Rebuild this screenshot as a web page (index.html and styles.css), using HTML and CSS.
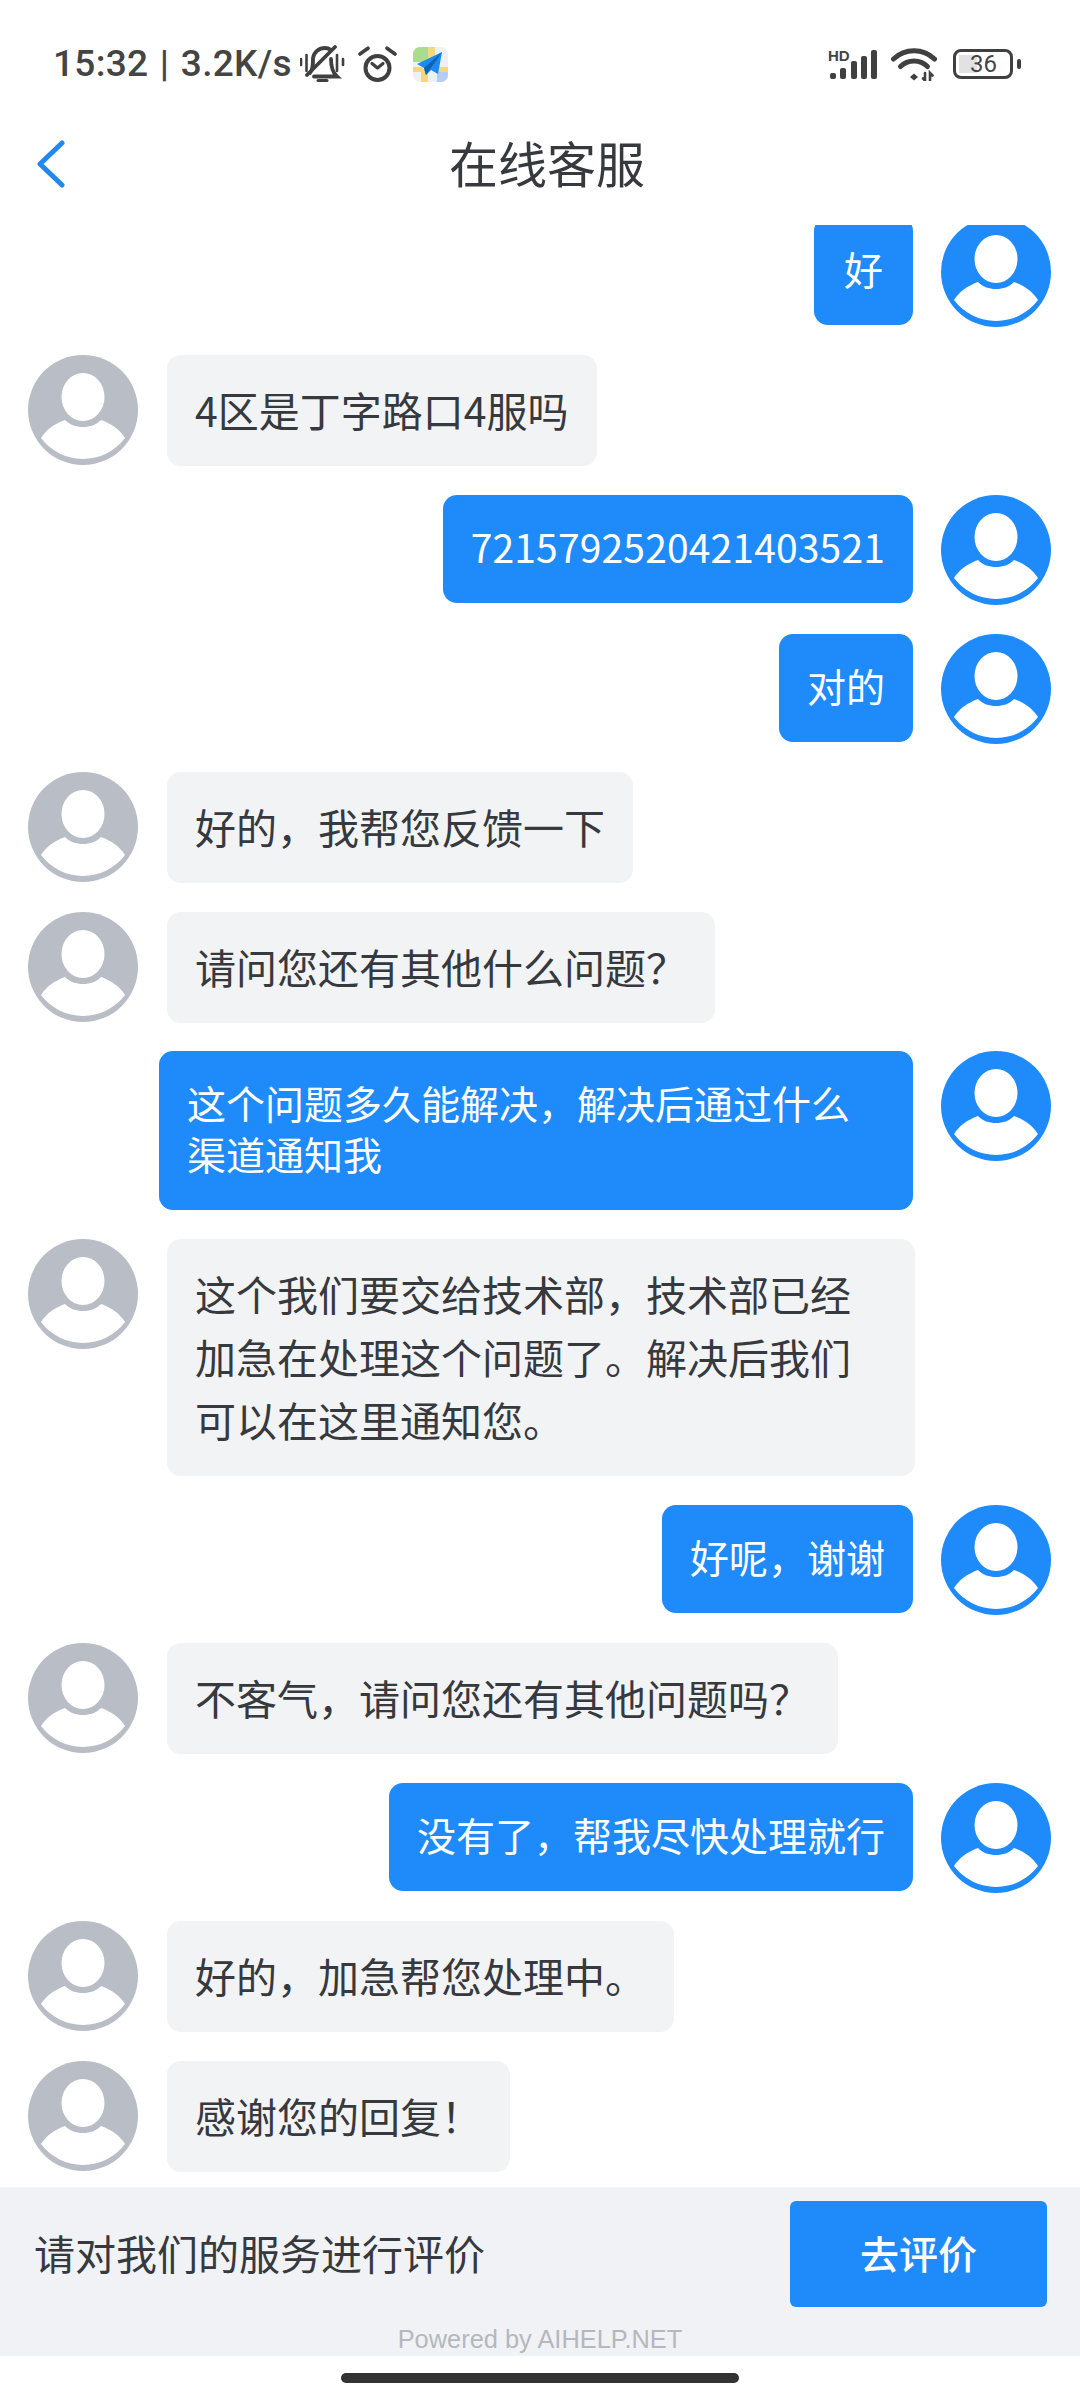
FILE: index.html
```html
<!DOCTYPE html>
<html lang="zh">
<head>
<meta charset="utf-8">
<title>在线客服</title>
<link rel="stylesheet" href="styles.css">
</head>
<body>

<svg class="defs" width="0" height="0">
  <symbol id="person" viewBox="0 0 110 110">
    <circle cx="55" cy="55" r="55" fill="currentColor"/>
    <ellipse cx="55" cy="42" rx="21.500" ry="24" fill="#fff"/>
    <path d="M13 83C18 75 26 69 37 65C42 70 48 72 55 72C62 72 68 70 73 65C84 69 92 75 97 83A52.500 52.500 0 0 1 13 83Z" fill="#fff"/>
  </symbol>
</svg>

<div class="page">

  <div class="status">
    <span class="status-text">15:32 | 3.2K/s</span>
    <svg class="ic-bell" viewBox="0 0 46 38" fill="none" stroke="#404040" stroke-linecap="round">
      <path d="M10 28C13 25 13 20 13 13C14 7 19 3 25 3C27 3 29 3.500 31 5" stroke-width="3.800"/>
      <path d="M31 14C31 21 32 27 37 31.500H14" stroke-width="3.800"/>
      <path d="M35 2L7 30" stroke-width="3.800"/>
      <path d="M18 35.500H27" stroke-width="3"/>
      <path d="M1 14V20M6.500 10V26M37 10V26M43 14V20" stroke-width="2.600"/>
    </svg>
    <svg class="ic-alarm" viewBox="0 0 40 36" fill="none" stroke="#404040" stroke-linecap="round" stroke-linejoin="round">
      <circle cx="19.500" cy="22" r="12" stroke-width="4"/>
      <path d="M14 17.500L19.500 22L25 17.500" stroke-width="3.200"/>
      <path d="M2 8L10 2.200M37 8L29 2.200" stroke-width="3.600"/>
    </svg>
    <svg class="ic-map" viewBox="0 0 35 35">
      <rect width="35" height="35" rx="7" fill="#eff0f5"/>
      <path d="M0 7A7 7 0 0 1 7 0H15V15H0Z" fill="#a9dc8c"/>
      <path d="M24 25H35V28A7 7 0 0 1 28 35H24Z" fill="#b4cdf6"/>
      <path d="M15 0H22V12H15ZM0 20H10V25H0ZM8 22H15V35H8ZM24 20H35V25H24Z" fill="#f6d77c"/>
      <path d="M29 5L4 17L11 21L13 28L18 23L25 27Z" fill="#1a8cf0"/>
      <path d="M11 21L29 5L13 28Z" fill="#0a62b8"/>
    </svg>
    <span class="status-gap"></span>
    <div class="cell">
      <span class="hd">HD</span>
      <svg class="ic-signal" viewBox="0 0 48 30" fill="#404040">
        <rect x="0" y="24" width="6" height="6" rx="2"/>
        <rect x="10" y="19" width="6" height="11" rx="2"/>
        <rect x="21" y="12" width="6" height="18" rx="2"/>
        <rect x="31" y="7" width="6" height="23" rx="2"/>
        <rect x="41" y="1" width="6" height="29" rx="2"/>
      </svg>
    </div>
    <svg class="ic-wifi" viewBox="0 0 46 33" fill="none" stroke="#404040" stroke-linecap="round">
      <path d="M2.500 11C14 0 32 0 43.500 11" stroke-width="5"/>
      <path d="M9.500 18.500C17 11 29 11 36.500 18.500" stroke-width="5"/>
      <path d="M19 29L23 25.500L27 29L23 32.500Z" fill="#404040" stroke="none"/>
      <path d="M34 25V32.500M32 30.500L34 32.500M39 32.500V25L41.500 27.500" stroke-width="2.600"/>
    </svg>
    <div class="battery">
      <div class="battery-body"><span class="battery-level"></span><span class="battery-num">36</span></div>
      <span class="battery-nub"></span>
    </div>
  </div>

  <div class="nav">
    <svg class="back" viewBox="0 0 32 50" fill="none" stroke="#2189ec" stroke-width="5" stroke-linecap="round" stroke-linejoin="round">
      <path d="M27 5L5 26L27 47"/>
    </svg>
    <div class="title">在线客服</div>
  </div>

  <div class="chat">
    <div class="row me">
      <div class="bubble short">好</div>
      <svg class="avatar"><use href="#person"/></svg>
    </div>
    <div class="row them">
      <svg class="avatar"><use href="#person"/></svg>
      <div class="bubble">4区是丁字路口4服吗</div>
    </div>
    <div class="row me">
      <div class="bubble digits">7215792520421403521</div>
      <svg class="avatar"><use href="#person"/></svg>
    </div>
    <div class="row me">
      <div class="bubble">对的</div>
      <svg class="avatar"><use href="#person"/></svg>
    </div>
    <div class="row them">
      <svg class="avatar"><use href="#person"/></svg>
      <div class="bubble">好的&#xFF0C;我帮您反馈一下</div>
    </div>
    <div class="row them">
      <svg class="avatar"><use href="#person"/></svg>
      <div class="bubble">请问您还有其他什么问题&#xFF1F;</div>
    </div>
    <div class="row me">
      <div class="bubble">这个问题多久能解决&#xFF0C;解决后通过什么渠道通知我</div>
      <svg class="avatar"><use href="#person"/></svg>
    </div>
    <div class="row them">
      <svg class="avatar"><use href="#person"/></svg>
      <div class="bubble">这个我们要交给技术部&#xFF0C;技术部已经加急在处理这个问题了。解决后我们可以在这里通知您。</div>
    </div>
    <div class="row me">
      <div class="bubble">好呢&#xFF0C;谢谢</div>
      <svg class="avatar"><use href="#person"/></svg>
    </div>
    <div class="row them">
      <svg class="avatar"><use href="#person"/></svg>
      <div class="bubble">不客气&#xFF0C;请问您还有其他问题吗&#xFF1F;</div>
    </div>
    <div class="row me">
      <div class="bubble">没有了&#xFF0C;帮我尽快处理就行</div>
      <svg class="avatar"><use href="#person"/></svg>
    </div>
    <div class="row them">
      <svg class="avatar"><use href="#person"/></svg>
      <div class="bubble">好的&#xFF0C;加急帮您处理中。</div>
    </div>
    <div class="row them">
      <svg class="avatar"><use href="#person"/></svg>
      <div class="bubble">感谢您的回复&#xFF01;</div>
    </div>
  </div>

  <div class="footer">
    <div class="rate">
      <span class="rate-text">请对我们的服务进行评价</span>
      <div class="rate-btn">去评价</div>
    </div>
    <div class="powered">Powered by AIHELP.NET</div>
  </div>

  <div class="home"><span class="home-bar"></span></div>

</div>
</body>
</html>
```

FILE: styles.css
```css
html, body
  {
	margin : 0;
	padding : 0;
	background-color : #fff;
  } /*html, body*/

.defs
  {
	position : absolute;
  } /*.defs*/

.page
  {
	display : flex;
	flex-direction : column;
	width : 1080px;
	height : 2400px;
	overflow : hidden;
	font-family : "Noto Sans CJK SC", "Noto Sans", sans-serif;
	color : #36393d;
  } /*.page*/

/* status bar */
.status
  {
	display : flex;
	align-items : center;
	flex : none;
	box-sizing : border-box;
	height : 84px;
	padding : 44px 0 0 53px;
	color : #444;
  } /*.status*/
.status svg
  {
	display : block;
	flex : none;
  } /*.status svg*/
.status-text
  {
	font-family : Roboto, sans-serif;
	font-size : 37px;
	font-weight : 500;
	line-height : 40px;
	letter-spacing : 0.3px;
	word-spacing : 2px;
	white-space : nowrap;
  } /*.status-text*/
.ic-bell
  {
	width : 46px;
	height : 38px;
	margin-left : 8px;
  } /*.ic-bell*/
.ic-alarm
  {
	width : 40px;
	height : 36px;
	margin-left : 12px;
  } /*.ic-alarm*/
.ic-map
  {
	width : 35px;
	height : 35px;
	margin-left : 15px;
  } /*.ic-map*/
.status-gap
  {
	flex : 1;
  } /*.status-gap*/
.cell
  {
	position : relative;
	width : 48px;
	height : 30px;
  } /*.cell*/
.hd
  {
	position : absolute;
	left : -2px;
	top : -1px;
	font-family : "Liberation Sans", sans-serif;
	font-size : 15px;
	line-height : 15px;
	font-weight : bold;
  } /*.hd*/
.ic-signal
  {
	width : 48px;
	height : 30px;
  } /*.ic-signal*/
.ic-wifi
  {
	width : 46px;
	height : 33px;
	margin-left : 13px;
  } /*.ic-wifi*/
.battery
  {
	display : flex;
	align-items : center;
	margin-left : 16px;
	margin-right : 59px;
  } /*.battery*/
.battery-body
  {
	position : relative;
	box-sizing : border-box;
	width : 60px;
	height : 30px;
	border : 3px solid #404040;
	border-radius : 8px;
  } /*.battery-body*/
.battery-level
  {
	position : absolute;
	left : 3px;
	top : 3px;
	bottom : 3px;
	width : 18px;
	background-color : #e2e2e2;
  } /*.battery-level*/
.battery-num
  {
	position : absolute;
	left : 14px;
	top : 0;
	font-family : Roboto, sans-serif;
	font-size : 24px;
	line-height : 24px;
  } /*.battery-num*/
.battery-nub
  {
	width : 4px;
	height : 10px;
	margin-left : 4px;
	border-radius : 2px;
	background-color : #404040;
  } /*.battery-nub*/

/* title bar */
.nav
  {
	display : flex;
	align-items : center;
	flex : none;
	box-sizing : border-box;
	height : 141px;
	padding : 17px 0 0 35px;
  } /*.nav*/
.back
  {
	display : block;
	flex : none;
	width : 32px;
	height : 50px;
  } /*.back*/
.title
  {
	flex : 1;
	padding : 0 53px 2px 0;
	text-align : center;
	font-size : 49px;
	line-height : 60px;
  } /*.title*/

/* messages */
.chat
  {
	display : flex;
	flex-direction : column;
	justify-content : flex-end;
	flex : 1;
	min-height : 0;
	overflow : hidden;
	gap : 28.6px;
	padding-bottom : 15px;
  } /*.chat*/
.row
  {
	display : flex;
	align-items : flex-start;
	flex : none;
	gap : 28px;
  } /*.row*/
.row.me
  {
	justify-content : flex-end;
	padding-right : 29px;
  } /*.row.me*/
.row.them
  {
	justify-content : flex-start;
	padding-left : 28px;
	gap : 29px;
  } /*.row.them*/
.avatar
  {
	display : block;
	flex : none;
	width : 110px;
	height : 110px;
  } /*.avatar*/
.me .avatar
  {
	color : #1f8bfa;
  } /*.me .avatar*/
.them .avatar
  {
	color : #b9bdc5;
  } /*.them .avatar*/
.bubble
  {
	box-sizing : border-box;
	border-radius : 14px;
  } /*.bubble*/
.me .bubble
  {
	max-width : 754px;
	padding : 26px 28px 31px;
	font-size : 39px;
	line-height : 51px;
	color : #fff;
	background-color : #1f8bfa;
  } /*.me .bubble*/
.me .bubble.short
  {
	min-width : 99px;
	text-align : center;
  } /*.me .bubble.short*/
.me .bubble.digits
  {
	letter-spacing : 0.16px;
  } /*.me .bubble.digits*/
.them .bubble
  {
	max-width : 748px;
	padding : 23px 28px 25px;
	font-size : 41px;
	line-height : 63px;
	background-color : #f2f3f5;
  } /*.them .bubble*/

/* rating bar */
.footer
  {
	flex : none;
	box-sizing : border-box;
	height : 169px;
	padding-top : 14px;
	background-color : #f0f2f5;
  } /*.footer*/
.rate
  {
	display : flex;
	align-items : center;
	justify-content : space-between;
	padding : 0 33px 0 34px;
  } /*.rate*/
.rate-text
  {
	padding-bottom : 5px;
	font-size : 41px;
	line-height : 60px;
  } /*.rate-text*/
.rate-btn
  {
	width : 257px;
	height : 106px;
	border-radius : 6px;
	text-align : center;
	font-size : 39px;
	font-weight : 500;
	line-height : 102px;
	color : #fff;
	background-color : #1f8bfa;
  } /*.rate-btn*/
.powered
  {
	padding-top : 17px;
	text-align : center;
	font-family : "Liberation Sans", sans-serif;
	font-size : 25.4px;
	line-height : 30px;
	color : #b5b8bd;
  } /*.powered*/

.home
  {
	display : flex;
	justify-content : center;
	flex : none;
	height : 44px;
	box-sizing : border-box;
	padding-top : 17px;
  } /*.home*/
.home-bar
  {
	width : 398px;
	height : 10px;
	border-radius : 5px;
	background-color : #333;
  } /*.home-bar*/
```
